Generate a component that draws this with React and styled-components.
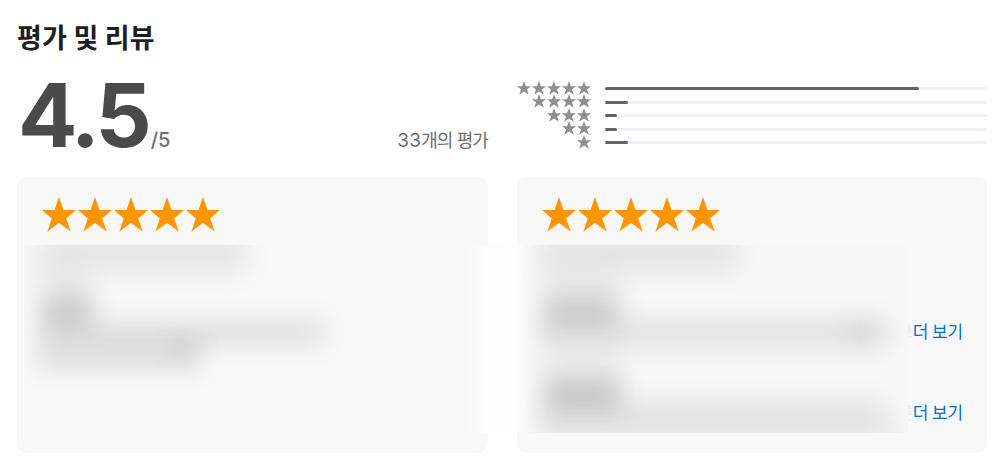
import React from 'react';
import styled, { createGlobalStyle } from 'styled-components';

const InitStyle = createGlobalStyle`
    * {
        box-sizing: border-box;
    }

    body {
        margin: 0;
        background-color: #fff;
        font-family: Inter, "Noto Sans CJK KR", sans-serif;
    }
`;

const Section = styled.section`
    position: relative;
    width: 1000px;
    height: 474px;
    padding: 17px 13px 0 17px;
    overflow: hidden;
`;

const Title = styled.h2`
    margin: 0;
    height: 40px;
    line-height: 40px;
    font-family: "Noto Sans CJK KR", sans-serif;
    font-size: 27px;
    font-weight: 700;
    letter-spacing: .2px;
    color: #1d1d1f;
`;

const Columns = styled.div`
    display: grid;
    grid-template-columns: 471px 470px;
    column-gap: 29px;
`;

const Summary = styled.div`
    display: flex;
    align-items: baseline;
    height: 120px;
    line-height: 117px;
    white-space: nowrap;
`;

const Score = styled.span`
    margin-left: 1px;
    font-size: 88px;
    font-weight: 700;
    letter-spacing: -4px;
    color: #4a4a4d;
`;

const OutOf = styled.span`
    margin-left: 3px;
    font-size: 20px;
    font-weight: 500;
    color: #6e6e73;
`;

const Count = styled.span`
    margin-left: auto;
    font-size: 18px;
    letter-spacing: -.9px;
    color: #6e6e73;
`;

const Digits = styled.span`
    font-size: 19px;
    letter-spacing: .2px;
`;

const Histogram = styled.div`
    display: flex;
    flex-direction: column;
    padding-top: 24.9px;
`;

const HistogramRow = styled.div`
    display: flex;
    align-items: center;
    height: 13.5px;
`;

const StarGroup = styled.div`
    display: flex;
    justify-content: ${props => props.$small ? 'flex-end' : 'flex-start'};
    gap: ${props => props.$small ? '1px' : '2px'};
    width: ${props => props.$small ? '74px' : 'auto'};
    margin-bottom: ${props => props.$small ? '2px' : '0'};
    color: ${props => props.$small ? '#8e8e93' : '#ff9500'};

    svg {
        display: block;
        flex: none;
        width: ${props => props.$small ? '14px' : '34px'};
        height: ${props => props.$small ? '14px' : '35px'};
    }
`;

const Track = styled.div`
    width: 382px;
    height: 3px;
    margin-left: 14px;
    border-radius: 2px;
    background-color: #f0f0f5;
`;

const Fill = styled.div`
    height: 3px;
    border-radius: 2px;
    background-color: #636366;
`;

const Card = styled.article`
    height: 276px;
    padding: 20px 24px 0 25px;
    border-radius: 10px;
    background-color: #f8f8f8;
`;

const MoreList = styled.div`
    display: flex;
    flex-direction: column;
    align-items: flex-end;
    gap: 55px;
    padding-top: 86px;
`;

const MoreRow = styled.div`
    display: flex;
    height: 26px;
    line-height: 26px;
    font-family: "Noto Sans CJK KR", sans-serif;
    font-size: 17px;
    letter-spacing: -.1px;
`;

const Faded = styled.span`
    color: #ebebeb;
`;

const More = styled.a`
    color: #0070c9;
`;

const Veil = styled.div`
    position: absolute;
    left: 24px;
    top: 245px;
    width: 884px;
    height: 188px;
    overflow: hidden;
    background: linear-gradient(90deg, #f8f8f8 442px, #fdfdfd 466px, #fefefe 486px, #f7f7f7 512px);
`;

const Smudge = styled.div`
    position: absolute;
    left: ${props => props.$x - 24}px;
    top: ${props => props.$y - 245}px;
    width: ${props => props.$w}px;
    height: ${props => props.$h}px;
    background-color: ${props => `rgba(0, 0, 0, ${props.$ink})`};
    filter: blur(12px);
`;

const HISTOGRAM = [
    { stars: 5, percent: 82.2 },
    { stars: 4, percent: 6 },
    { stars: 3, percent: 3.1 },
    { stars: 2, percent: 3.1 },
    { stars: 1, percent: 6 },
];

// x, y, width, height, ink
const SMUDGES = [
    [ 39, 234, 206, 38, .075 ],
    [ 39, 268, 50, 22, .04 ],
    [ 42, 292, 50, 34, .17 ],
    [ 39, 321, 284, 24, .1 ],
    [ 39, 345, 160, 24, .11 ],
    [ 170, 335, 28, 26, .05 ],
    [ 540, 234, 197, 38, .075 ],
    [ 540, 268, 80, 22, .035 ],
    [ 544, 293, 74, 32, .17 ],
    [ 540, 320, 345, 26, .09 ],
    [ 845, 320, 38, 28, .04 ],
    [ 540, 345, 80, 25, .045 ],
    [ 545, 375, 75, 34, .18 ],
    [ 540, 401, 345, 30, .08 ],
    [ 540, 424, 365, 20, .04 ],
];

function App() {

    return (
        <>
        <InitStyle />
        <Section>
            <Title>평가 및 리뷰</Title>

            <Columns>
                <Summary>
                    <Score>4.5</Score>
                    <OutOf>/5</OutOf>
                    <Count><Digits>33</Digits>개의 평가</Count>
                </Summary>
                <Histogram>
                    { HISTOGRAM.map( row => (
                        <HistogramRow key={ row.stars }>
                            <Stars count={ row.stars } small />
                            <Track>
                                <Fill style={ { width: `${row.percent}%` } } />
                            </Track>
                        </HistogramRow>
                    ) ) }
                </Histogram>

                <Card>
                    <Stars count={ 5 } />
                </Card>
                <Card>
                    <Stars count={ 5 } />
                    <MoreList>
                        <MoreRow><Faded>그</Faded><More>더 보기</More></MoreRow>
                        <MoreRow><Faded>른</Faded><More>더 보기</More></MoreRow>
                    </MoreList>
                </Card>
            </Columns>

            <Veil>
                { SMUDGES.map( ( [ x, y, w, h, ink ], i ) => (
                    <Smudge key={ i } $x={ x } $y={ y } $w={ w } $h={ h } $ink={ ink } />
                ) ) }
            </Veil>
        </Section>
        </>
    );
}

const Stars = ( { count, small } ) => {
    return (
        <StarGroup $small={ small }>
            { Array.from( { length: count }, ( _, i ) => (
                <svg key={ i } viewBox="0 0 34 35" preserveAspectRatio="none">
                    <path fill="currentColor" d="M17 0L21.5 13H34L24.2 21.5L28.8 34.5L17 26L5.4 34.5L9.8 21.5L0 13H12.5Z" />
                </svg>
            ) ) }
        </StarGroup>
    )
}

export default App;
